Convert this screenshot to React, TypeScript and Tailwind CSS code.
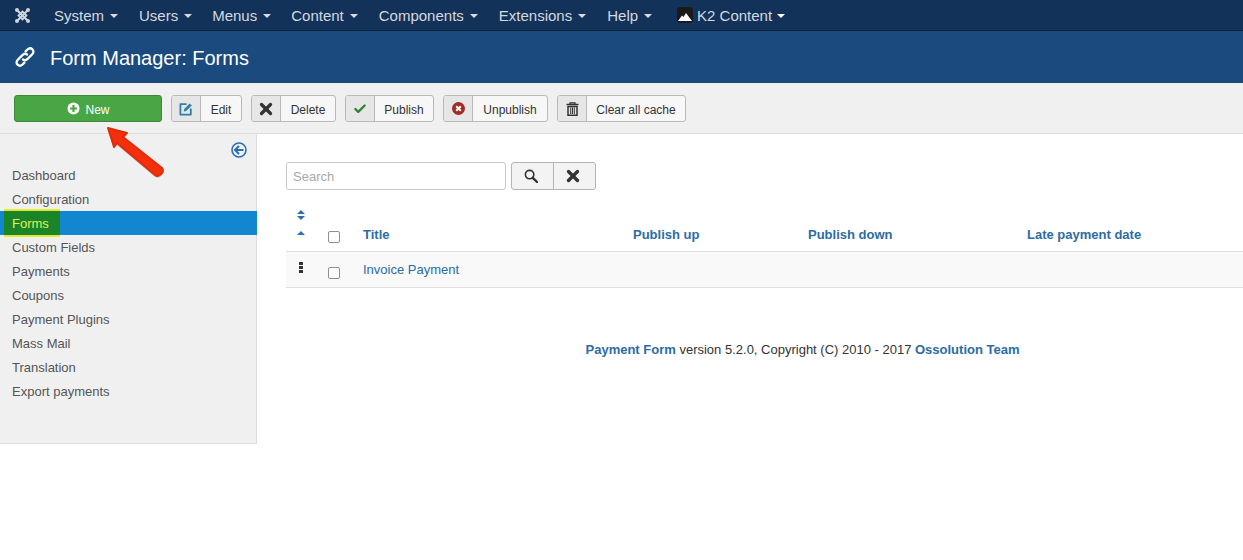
import { Check, X } from 'lucide-react'
import type { ReactNode } from 'react'

const menus = [
  { label: 'System', className: 'mr-[21px]' },
  { label: 'Users', className: 'mr-[20px]' },
  { label: 'Menus', className: 'mr-[20px]' },
  { label: 'Content', className: 'mr-[21px]' },
  { label: 'Components', className: 'mr-[21px]' },
  { label: 'Extensions', className: 'mr-[21px]' },
  { label: 'Help', className: 'mr-[25px]' },
]

const sideItems = ['Dashboard', 'Configuration', 'Forms', 'Custom Fields', 'Payments', 'Coupons', 'Payment Plugins', 'Mass Mail', 'Translation', 'Export payments']

function Caret() {
  return <span className="ml-[6px] inline-block h-0 w-0 border-x-[4px] border-t-[4px] border-x-transparent border-t-[#d9dde3]" />
}

function JoomlaLogo() {
  return (
    <svg width="17" height="17" viewBox="0 0 17 17" fill="none" stroke="#cfd3d9" strokeLinecap="round">
      <path d="M4 4 L13 13 M13 4 L4 13" strokeWidth="2.2" />
      <path d="M4.5 8.5 L8.5 4.5 L12.5 8.5 L8.5 12.5 Z" strokeWidth="1.8" />
      <circle cx="3" cy="3" r="2" fill="#cfd3d9" stroke="none" />
      <circle cx="14" cy="3" r="2" fill="#cfd3d9" stroke="none" />
      <circle cx="3" cy="14" r="2" fill="#cfd3d9" stroke="none" />
      <circle cx="14" cy="14" r="2" fill="#cfd3d9" stroke="none" />
    </svg>
  )
}

function LinkIcon() {
  return (
    <svg width="22" height="22" viewBox="0 0 22 22" fill="none" stroke="#fff" strokeWidth="2.3" strokeLinecap="round" strokeLinejoin="round">
      <path d="M9 13.5 C10.5 14.6 12.3 14.2 13.6 12.9 L18.2 8.3 C19.8 6.7 19.8 4.6 18.4 3.3 C17 2 15 2.1 13.5 3.5 L11.6 5.4" />
      <path d="M13 8.5 C11.5 7.4 9.7 7.8 8.4 9.1 L3.8 13.7 C2.2 15.3 2.2 17.4 3.6 18.7 C5 20 7 19.9 8.5 18.5 L10.4 16.6" />
    </svg>
  )
}

function EditIcon() {
  return (
    <svg width="14" height="14" viewBox="0 0 14 14" fill="none" stroke="#2f7fa6" strokeWidth="1.8">
      <path d="M7.5 2.2 H1.4 V12.6 H11.8 V6.5" strokeLinejoin="round" />
      <path d="M4.8 9.4 L5.2 7 L10.6 1.4 L12.8 3.6 L7.2 9 Z" fill="#2f7fa6" stroke="none" />
    </svg>
  )
}

function TrashIcon() {
  return (
    <svg width="13" height="14" viewBox="0 0 13 14" fill="none" stroke="#333">
      <path d="M0.5 2.6 H12.5" strokeWidth="1.5" />
      <path d="M4 2.4 V0.9 H9 V2.4" strokeWidth="1.2" />
      <path d="M2 4.4 H11 V13.2 H2 Z" strokeWidth="1.5" />
      <path d="M4.7 5.5 V12 M6.5 5.5 V12 M8.3 5.5 V12" strokeWidth="1" />
    </svg>
  )
}

function SearchIcon() {
  return (
    <svg width="14" height="14" viewBox="0 0 14 14" fill="none" stroke="#333">
      <circle cx="5.6" cy="5.6" r="4.2" strokeWidth="1.6" />
      <path d="M8.8 8.8 L13 13" strokeWidth="2.4" strokeLinecap="round" />
    </svg>
  )
}

function ToolButton({ icon, label, textWidth }: { icon: ReactNode; label: string; textWidth: string }) {
  return (
    <div className="flex h-[27px] overflow-hidden rounded-[3px] border border-[#b9b9b9] bg-[#f7f7f7] text-[12px] text-[#333]">
      <div className="flex w-[29px] items-center justify-center border-r border-[#b9b9b9] bg-[#e6e6e6]">{icon}</div>
      <div className={`flex items-center justify-center pt-[2px] ${textWidth}`}>{label}</div>
    </div>
  )
}

function Checkbox() {
  return <span className="block h-[12px] w-[12px] rounded-[2px] border border-[#8f8f8f] bg-white" />
}

export default function App() {
  return (
    <div className="relative h-[560px] w-[1243px] overflow-hidden bg-white font-['Liberation_Sans',Arial,sans-serif]">
      {/* top menu */}
      <nav className="flex h-[31px] items-center border-b border-[#0c2238] bg-[#12325a] pl-[14px] text-[15px] text-[#d5d9de]">
        <div className="mr-[23px] flex w-[17px]"><JoomlaLogo /></div>
        {menus.map((m) => (
          <span key={m.label} className={`flex items-center pt-[2px] ${m.className}`}>
            {m.label}
            <Caret />
          </span>
        ))}
        <span className="flex items-center pt-[2px]">
          <span className="mr-[4px] -mt-[2px] flex h-[16px] w-[16px] items-end justify-center overflow-hidden rounded-[3px] bg-[#1a1a1a]">
            <svg width="14" height="11" viewBox="0 0 14 11"><path d="M0 9 L4 3.5 L5.5 5 L8 1 L14 9 Z" fill="#fff" /></svg>
          </span>
          K2 Content
          <span className="ml-[5px] inline-block h-0 w-0 border-x-[4px] border-t-[4px] border-x-transparent border-t-white" />
        </span>
      </nav>

      {/* title */}
      <header className="flex h-[52px] items-center bg-[#1a4a7e] pl-[14px] text-white">
        <span className="mr-[14px] flex"><LinkIcon /></span>
        <h1 className="pt-[2px] text-[20px] leading-none font-normal">Form Manager: Forms</h1>
      </header>

      {/* toolbar */}
      <div className="flex h-[51px] items-start gap-[9px] border-b border-[#dcdcdc] bg-[#f0f0f0] pt-[12px] pl-[14px]">
        <button className="flex h-[27px] w-[148px] items-center justify-center gap-[5px] rounded-[3px] border border-[#3c8a37] bg-[#4aa644] pt-[2px] pl-[1px] text-[12px] text-white">
          <svg width="13" height="13" viewBox="0 0 13 13" className="-mt-[2px]">
            <circle cx="6.5" cy="6.5" r="6" fill="#fff" />
            <path d="M6.5 3 V10 M3 6.5 H10" stroke="#4aa644" strokeWidth="2.2" />
          </svg>
          New
        </button>
        <ToolButton icon={<EditIcon />} label="Edit" textWidth="w-[40px]" />
        <ToolButton icon={<X size={18} strokeWidth={4.4} className="text-[#333]" />} label="Delete" textWidth="w-[54px]" />
        <ToolButton icon={<Check size={14} strokeWidth={4} className="text-[#378137]" />} label="Publish" textWidth="w-[58px]" />
        <ToolButton
          icon={
            <svg width="13" height="13" viewBox="0 0 13 13">
              <circle cx="6.5" cy="6.5" r="6.5" fill="#a22c24" />
              <path d="M4.2 4.2 L8.8 8.8 M8.8 4.2 L4.2 8.8" stroke="#fff" strokeWidth="2" />
            </svg>
          }
          label="Unpublish"
          textWidth="w-[74px]"
        />
        <ToolButton icon={<TrashIcon />} label="Clear all cache" textWidth="w-[98px]" />
      </div>

      <div className="flex items-start">
        {/* sidebar */}
        <aside className="h-[310px] w-[257px] shrink-0 border-r border-b border-[#dcdcdc] bg-[#f0f0f0] text-[13px] text-[#555]">
          <div className="flex h-[29px] justify-end pt-[8px] pr-[9px]">
            <svg width="16" height="16" viewBox="0 0 16 16" fill="none" stroke="#2a6fb5" strokeWidth="1.6">
              <circle cx="8" cy="8" r="7" />
              <path d="M8 4 L4 8 L8 12 M4.5 8 H12.5" strokeWidth="2" />
            </svg>
          </div>
          <ul>
            {sideItems.map((item) =>
              item === 'Forms' ? (
                <li key={item} className="relative -mr-px flex h-[24px] items-center bg-[#1287d0] pt-[1px] pl-[12px]">
                  <span className="absolute top-[-2px] left-[4px] h-[28px] w-[56px] border-y-[2px] border-[#e4e930] bg-[#1a8428]" />
                  <span className="relative text-[#e6ee55]">{item}</span>
                </li>
              ) : (
                <li key={item} className="flex h-[24px] items-center pt-[1px] pl-[12px]">{item}</li>
              ),
            )}
          </ul>
        </aside>

        {/* main */}
        <main className="flex-1 pt-[28px] pl-[29px]">
          <div className="flex gap-[5px]">
            <div className="flex h-[28px] w-[220px] items-center rounded-[3px] border border-[#c8c8c8] bg-white pt-[2px] pl-[6px] text-[13px] text-[#a8a8a8]">Search</div>
            <div className="flex h-[28px] overflow-hidden rounded-[3px] border border-[#b3b3b3] bg-[#f3f3f3]">
              <span className="flex w-[42px] items-center justify-center border-r border-[#b3b3b3] pr-[3px]"><SearchIcon /></span>
              <span className="flex w-[41px] items-center justify-center pr-[3px]"><X size={18} strokeWidth={4.4} className="text-[#333]" /></span>
            </div>
          </div>

          <div className="mt-[19px] w-[957px]">
            <div className="flex h-[43px] items-end border-b border-[#dfdfdf] pb-[7px] text-[13px] font-bold text-[#2c6ca5]">
              <span className="flex w-[30px] flex-col items-center gap-[11px] pb-[9px]">
                <svg width="8" height="10" viewBox="0 0 8 10" fill="#2a6faf"><path d="M4 0 L8 4 H0 Z M4 10 L8 6 H0 Z" /></svg>
                <svg width="8" height="4" viewBox="0 0 8 4" fill="#2a6faf"><path d="M4 0 L8 4 H0 Z" /></svg>
              </span>
              <span className="flex w-[47px] justify-start pl-[12px]"><span className="mb-[1px]"><Checkbox /></span></span>
              <span className="w-[270px]">Title</span>
              <span className="w-[175px]">Publish up</span>
              <span className="w-[219px]">Publish down</span>
              <span>Late payment date</span>
            </div>
            <div className="flex h-[36px] items-center border-b border-[#dfdfdf] bg-[#f9f9f9] text-[13px] text-[#2c6ca5]">
              <span className="flex w-[30px] flex-col items-center gap-[1px] pb-[4px]">
                <span className="h-[3px] w-[4px] bg-[#333]" />
                <span className="h-[3px] w-[4px] bg-[#333]" />
                <span className="h-[3px] w-[4px] bg-[#333]" />
              </span>
              <span className="w-[47px] pt-[6px] pl-[12px]"><Checkbox /></span>
              <span>Invoice Payment</span>
            </div>
          </div>

          <p className="mt-[52px] w-[1033px] text-center text-[13px] text-[#333]">
            <b className="text-[#2c6ca5]">Payment Form</b> version 5.2.0, Copyright (C) 2010 - 2017 <b className="text-[#2c6ca5]">Ossolution Team</b>
          </p>
        </main>
      </div>

      {/* annotation arrow */}
      <svg className="absolute top-[124px] left-[104px]" width="64" height="58" viewBox="0 0 64 58">
        <path d="M4 4 L23 9 L19 13 L58 44 C61 48 55 54 51 51 L13 19 L10 23 Z" fill="#000" opacity="0.2" transform="translate(0 2)" />
        <path d="M4 4 L23 9 L19 13 L58 44 C61 48 55 54 51 51 L13 19 L10 23 Z" fill="#f4300c" stroke="#e02c0a" strokeWidth="2" strokeLinejoin="round" />
      </svg>
    </div>
  )
}
